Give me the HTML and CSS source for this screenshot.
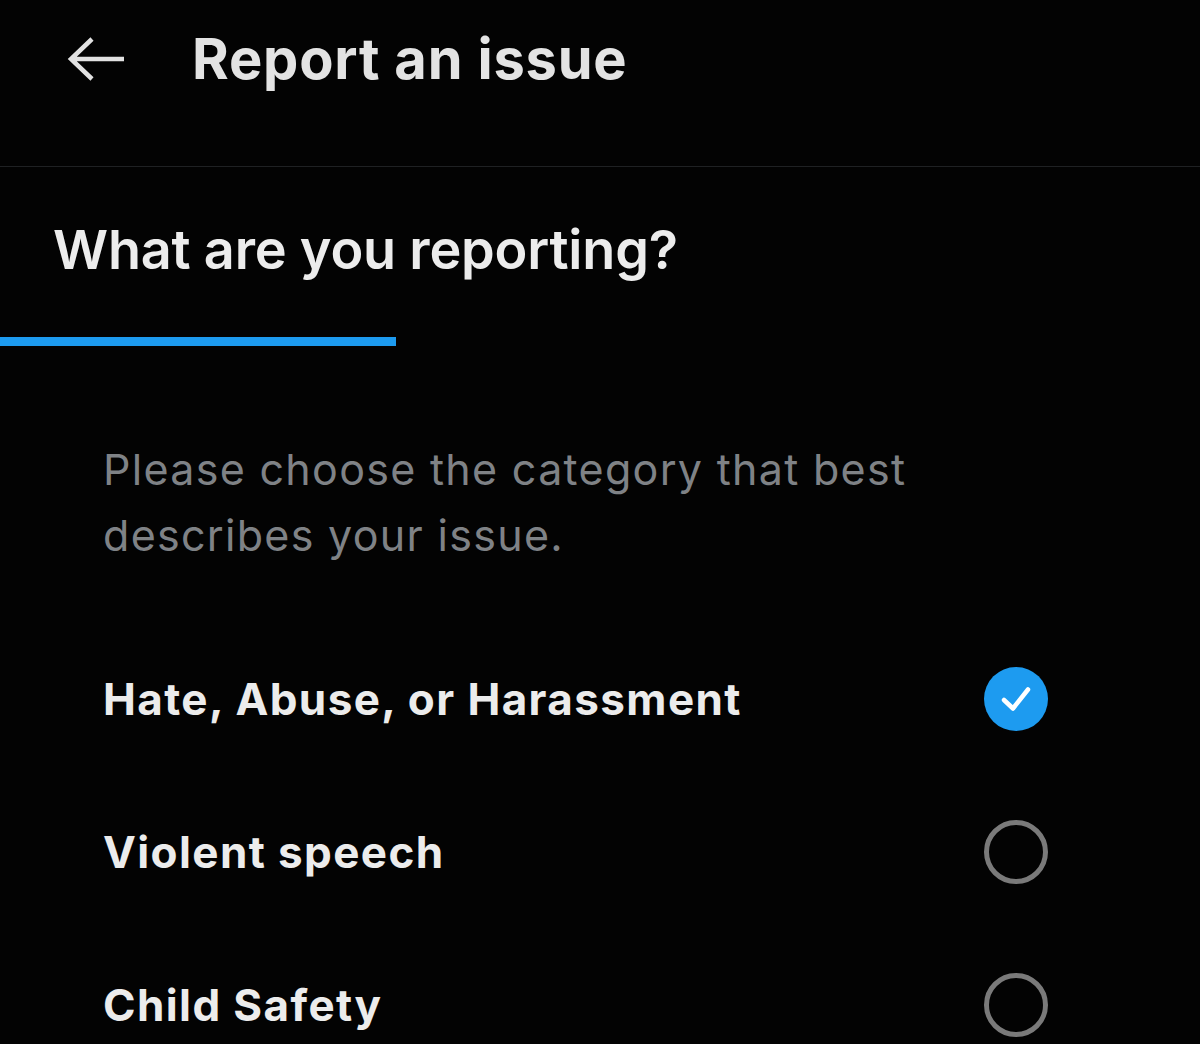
FILE: index.html
```html
<!DOCTYPE html>
<html lang="en">
<head>
<meta charset="utf-8">
<title>Report an issue</title>
<link rel="stylesheet" href="styles.css">
</head>
<body>
<div class="screen">
  <header class="topbar">
    <svg class="back" viewBox="0 0 60 48" aria-hidden="true">
      <path d="M58 24H6M26 4L5 24l21 20" fill="none" stroke="#e2e2e2" stroke-width="4.5" stroke-linecap="butt" stroke-linejoin="miter"/>
    </svg>
    <h1 class="title">Report an issue</h1>
  </header>
  <section class="tabs">
    <h2 class="tab-title">What are you reporting?</h2>
    <div class="tab-indicator"></div>
  </section>
  <main class="content">
    <p class="desc">Please choose the category that best describes your issue.</p>
    <ul class="options">
      <li class="option">
        <span class="option-label">Hate, Abuse, or Harassment</span>
        <span class="radio radio-checked">
          <svg viewBox="0 0 64 64" aria-hidden="true"><path d="M20 33l9 8.5 15-19" fill="none" stroke="#fff" stroke-width="4.5" stroke-linecap="round" stroke-linejoin="round"/></svg>
        </span>
      </li>
      <li class="option">
        <span class="option-label">Violent speech</span>
        <span class="radio"></span>
      </li>
      <li class="option">
        <span class="option-label">Child Safety</span>
        <span class="radio"></span>
      </li>
    </ul>
  </main>
</div>
</body>
</html>
```
FILE: styles.css
```css
html, body {
  margin: 0;
  padding: 0;
  background: #030303;
}
.screen {
  width: 1200px;
  height: 1044px;
  overflow: hidden;
  background: #030303;
  font-family: Inter, "Liberation Sans", sans-serif;
  color: #e6e6e6;
}
.topbar {
  height: 167px;
  box-sizing: border-box;
  border-bottom: 1px solid #1f2123;
  display: flex;
  align-items: center;
  padding-left: 66px;
  padding-bottom: 48px;
  padding-top: 0;
  gap: 66px;
  margin: 0;
}
.back {
  width: 60px;
  height: 48px;
  flex: none;
}
.title {
  margin: 0;
  font-size: 56px;
  font-weight: 700;
  letter-spacing: 0.8px;
  line-height: 60px;
  color: #e3e3e3;
}
.tabs {
  height: 179px;
  display: flex;
  flex-direction: column;
  justify-content: space-between;
}
.tab-title {
  margin: 0;
  padding: 51px 0 0 53px;
  font-size: 54px;
  font-weight: 600;
  letter-spacing: -0.2px;
  line-height: 64px;
  color: #ececec;
}
.tab-indicator {
  width: 396px;
  height: 9px;
  background: #1d9bf0;
}
.content {
  padding: 0 152px 0 103px;
}
.desc {
  margin: 0;
  padding-top: 90px;
  width: 860px;
  font-size: 43px;
  line-height: 66px;
  letter-spacing: 1.3px;
  font-weight: 400;
  color: #7f8286;
}
.options {
  list-style: none;
  margin: 0;
  padding: 54px 0 0;
}
.option {
  height: 153px;
  display: flex;
  align-items: center;
  justify-content: space-between;
}
.option-label {
  font-size: 44px;
  font-weight: 700;
  letter-spacing: 1.4px;
  color: #ececec;
}
.radio {
  width: 64px;
  height: 64px;
  box-sizing: border-box;
  border-radius: 50%;
  border: 5px solid #7a7a7a;
  flex: none;
}
.radio-checked {
  border: none;
  background: #1d9bf0;
}
.radio-checked svg {
  display: block;
  width: 64px;
  height: 64px;
}
```
